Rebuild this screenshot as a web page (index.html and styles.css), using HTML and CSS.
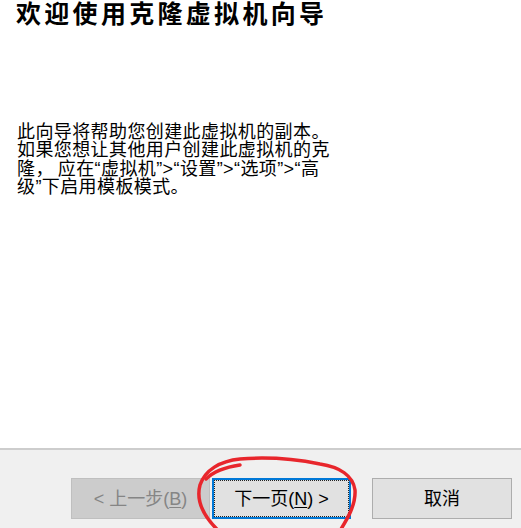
FILE: index.html
```html
<!DOCTYPE html>
<html lang="zh-CN">
<head>
<meta charset="utf-8">
<title>克隆虚拟机向导</title>
<link rel="stylesheet" href="styles.css">
</head>
<body>
<div class="wizard">
  <main class="content">
    <h1 class="title">欢迎使用克隆虚拟机向导</h1>
    <p class="desc">此向导将帮助您创建此虚拟机的副本。<br>如果您想让其他用户创建此虚拟机的克<br>隆<span class="comma">，</span>应在“虚拟机”&gt;“设置”&gt;“选项”&gt;“高<br>级”下启用模板模式。</p>
  </main>
  <div class="separator"></div>
  <footer class="footer">
    <button class="btn btn-disabled" type="button">&lt; 上一步(<u>B</u>)</button>
    <button class="btn btn-default" type="button">下一页(<u>N</u>) &gt;</button>
    <button class="btn btn-cancel" type="button">取消</button>
  </footer>
  <svg class="annotation" width="521" height="528" viewBox="0 0 521 528" aria-hidden="true">
    <path d="M 338 534 C 346 521 356 506 355 490 C 353 476 340 467 320 464 C 295 459 265 457 240 459 C 220 461 205 470 200 485 C 196 500 203 517 222 534" />
    <path d="M 240 465 C 226 467 214 471 206 479" />
  </svg>
</div>
</body>
</html>
```

FILE: styles.css
```css
html, body {
  margin: 0;
  padding: 0;
  background: #ffffff;
}

body {
  font-family: "Liberation Sans", "Noto Sans CJK SC", sans-serif;
  color: #000000;
  width: 521px;
  height: 528px;
  overflow: hidden;
}

.wizard {
  position: relative;
  width: 521px;
  height: 528px;
  display: flex;
  flex-direction: column;
}

.content {
  height: 448px;
  padding: 0 0 0 16px;
  box-sizing: border-box;
}

.title {
  margin: 0;
  font-size: 25px;
  line-height: 28px;
  font-weight: bold;
  letter-spacing: 3.3px;
  white-space: nowrap;
}

.desc {
  margin: 95px 0 0 1px;
  font-size: 18px;
  line-height: 18.35px;
  letter-spacing: 0.4px;
  white-space: nowrap;
}

.comma {
  margin-right: 4px;
}

.separator {
  height: 2px;
  background: #cdcdcd;
}

.footer {
  flex: 1;
  background: #f0f0f0;
  display: flex;
  justify-content: flex-end;
  align-items: flex-start;
  padding: 28px 9px 0 0;
  box-sizing: border-box;
}

.btn {
  height: 41px;
  width: 139px;
  box-sizing: border-box;
  font-family: "Liberation Sans", "Noto Sans CJK SC", sans-serif;
  font-size: 18px;
  line-height: 1;
  padding: 0;
  border: 1px solid #adadad;
  background: #e1e1e1;
  color: #000000;
}

.btn u {
  text-underline-offset: 2px;
}

.btn-disabled {
  background: #cccccc;
  border-color: #bfbfbf;
  color: #858585;
  margin-right: 2px;
}

.btn-default {
  border: 2px solid #0078d7;
  outline: 1px dotted #222222;
  outline-offset: -3px;
  margin-right: 21px;
}

.btn-cancel {
  width: 140px;
}

.annotation {
  position: absolute;
  left: 0;
  top: 0;
  pointer-events: none;
}

.annotation path {
  fill: none;
  stroke: #e8262c;
  stroke-width: 3.5;
  stroke-linecap: round;
  stroke-linejoin: round;
}
```
